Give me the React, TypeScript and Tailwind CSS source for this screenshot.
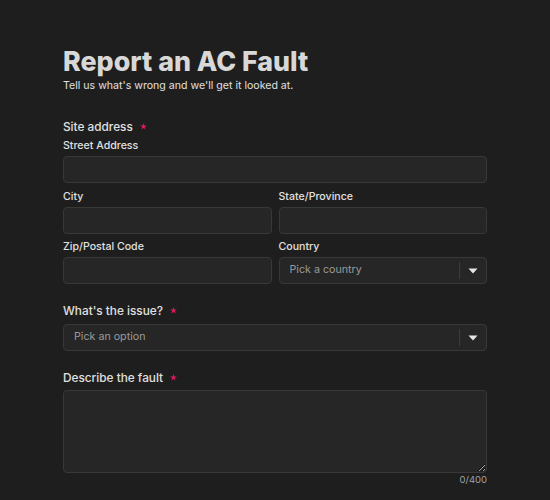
import { useState } from 'react';

function Star() {
    return (
        <svg width="7" height="7" viewBox="0 0 10 10" className="ml-[7px] -mt-[2px] text-[#d81b5c]">
            <path d="M5 0 L6.2 3.4 L9.8 3.4 L6.9 5.6 L8 9.2 L5 7 L2 9.2 L3.1 5.6 L0.2 3.4 L3.8 3.4 Z" fill="currentColor" />
        </svg>
    );
}

function Chevron() {
    return (
        <svg width="10" height="6" viewBox="0 0 10 6" className="text-[#e5e5e5]">
            <path d="M0.5 0.5 H9.5 L5 5.5 Z" fill="currentColor" />
        </svg>
    );
}

function SelectBox({ placeholder }: { placeholder: string }) {
    return (
        <div className="h-[27px] flex items-center bg-[#262626] border border-[#383838] rounded-[4px]">
            <span className="flex-1 pl-[10px] text-[10.7px] text-[#9a9a9a]">{placeholder}</span>
            <div className="w-px h-[17px] bg-[#3c3c3c]" />
            <div className="w-[26px] flex items-center justify-center">
                <Chevron />
            </div>
        </div>
    );
}

const inputCls = 'w-full h-[27px] bg-[#262626] border border-[#383838] rounded-[4px] outline-none px-2.5 text-[11px] text-[#e5e5e5]';
const labelCls = 'block text-[10.6px] leading-[15px] font-medium text-[#e0e0e0]';
const headCls = 'text-[11.8px] leading-[16px] font-medium text-[#e0e0e0] flex items-center';

export default function App() {
    const [desc, setDesc] = useState('');

    return (
        <div className="min-h-[500px] bg-[#1e1e1e] text-[#e5e5e5]" style={{ fontFamily: 'Inter, "Noto Sans", sans-serif' }}>
            <div className="w-[424px] ml-[63px] pt-[44px]">
                <h1 className="text-[26.8px] leading-[34px] font-extrabold text-[#d8d8d8]">Report an AC Fault</h1>
                <p className="text-[10.6px] leading-[14px] text-[#e0e0e0] mt-[1px]">Tell us what's wrong and we'll get it looked at.</p>

                <div className="mt-[26px]">
                    <div className={headCls}>
                        Site address <Star />
                    </div>
                    <label className={`${labelCls} mt-[3px]`}>Street Address</label>
                    <input className={`${inputCls} mt-[3px]`} />

                    <div className="grid grid-cols-2 gap-x-[7px] mt-[6px]">
                        <div>
                            <label className={labelCls}>City</label>
                            <input className={`${inputCls} mt-[3px]`} />
                        </div>
                        <div>
                            <label className={labelCls}>State/Province</label>
                            <input className={`${inputCls} mt-[3px]`} />
                        </div>
                    </div>
                    <div className="grid grid-cols-2 gap-x-[7px] mt-[5px]">
                        <div>
                            <label className={labelCls}>Zip/Postal Code</label>
                            <input className={`${inputCls} mt-[3px]`} />
                        </div>
                        <div>
                            <label className={labelCls}>Country</label>
                            <div className="mt-[3px]">
                                <SelectBox placeholder="Pick a country" />
                            </div>
                        </div>
                    </div>
                </div>

                <div className="mt-[19px]">
                    <div className={headCls}>
                        What's the issue? <Star />
                    </div>
                    <div className="mt-[5px]">
                        <SelectBox placeholder="Pick an option" />
                    </div>
                </div>

                <div className="mt-[19px]">
                    <div className={headCls}>
                        Describe the fault <Star />
                    </div>
                    <textarea
                        value={desc}
                        onChange={(e) => setDesc(e.target.value.slice(0, 400))}
                        className="block w-full h-[83px] mt-[4px] bg-[#262626] border border-[#383838] rounded-[4px] outline-none px-2.5 py-2 text-[11px] text-[#e5e5e5]"
                    />
                    <div className="text-right text-[9.5px] leading-[12px] text-[#a0a0a0] mt-[1px]">{desc.length}/400</div>
                </div>
            </div>
        </div>
    );
}
